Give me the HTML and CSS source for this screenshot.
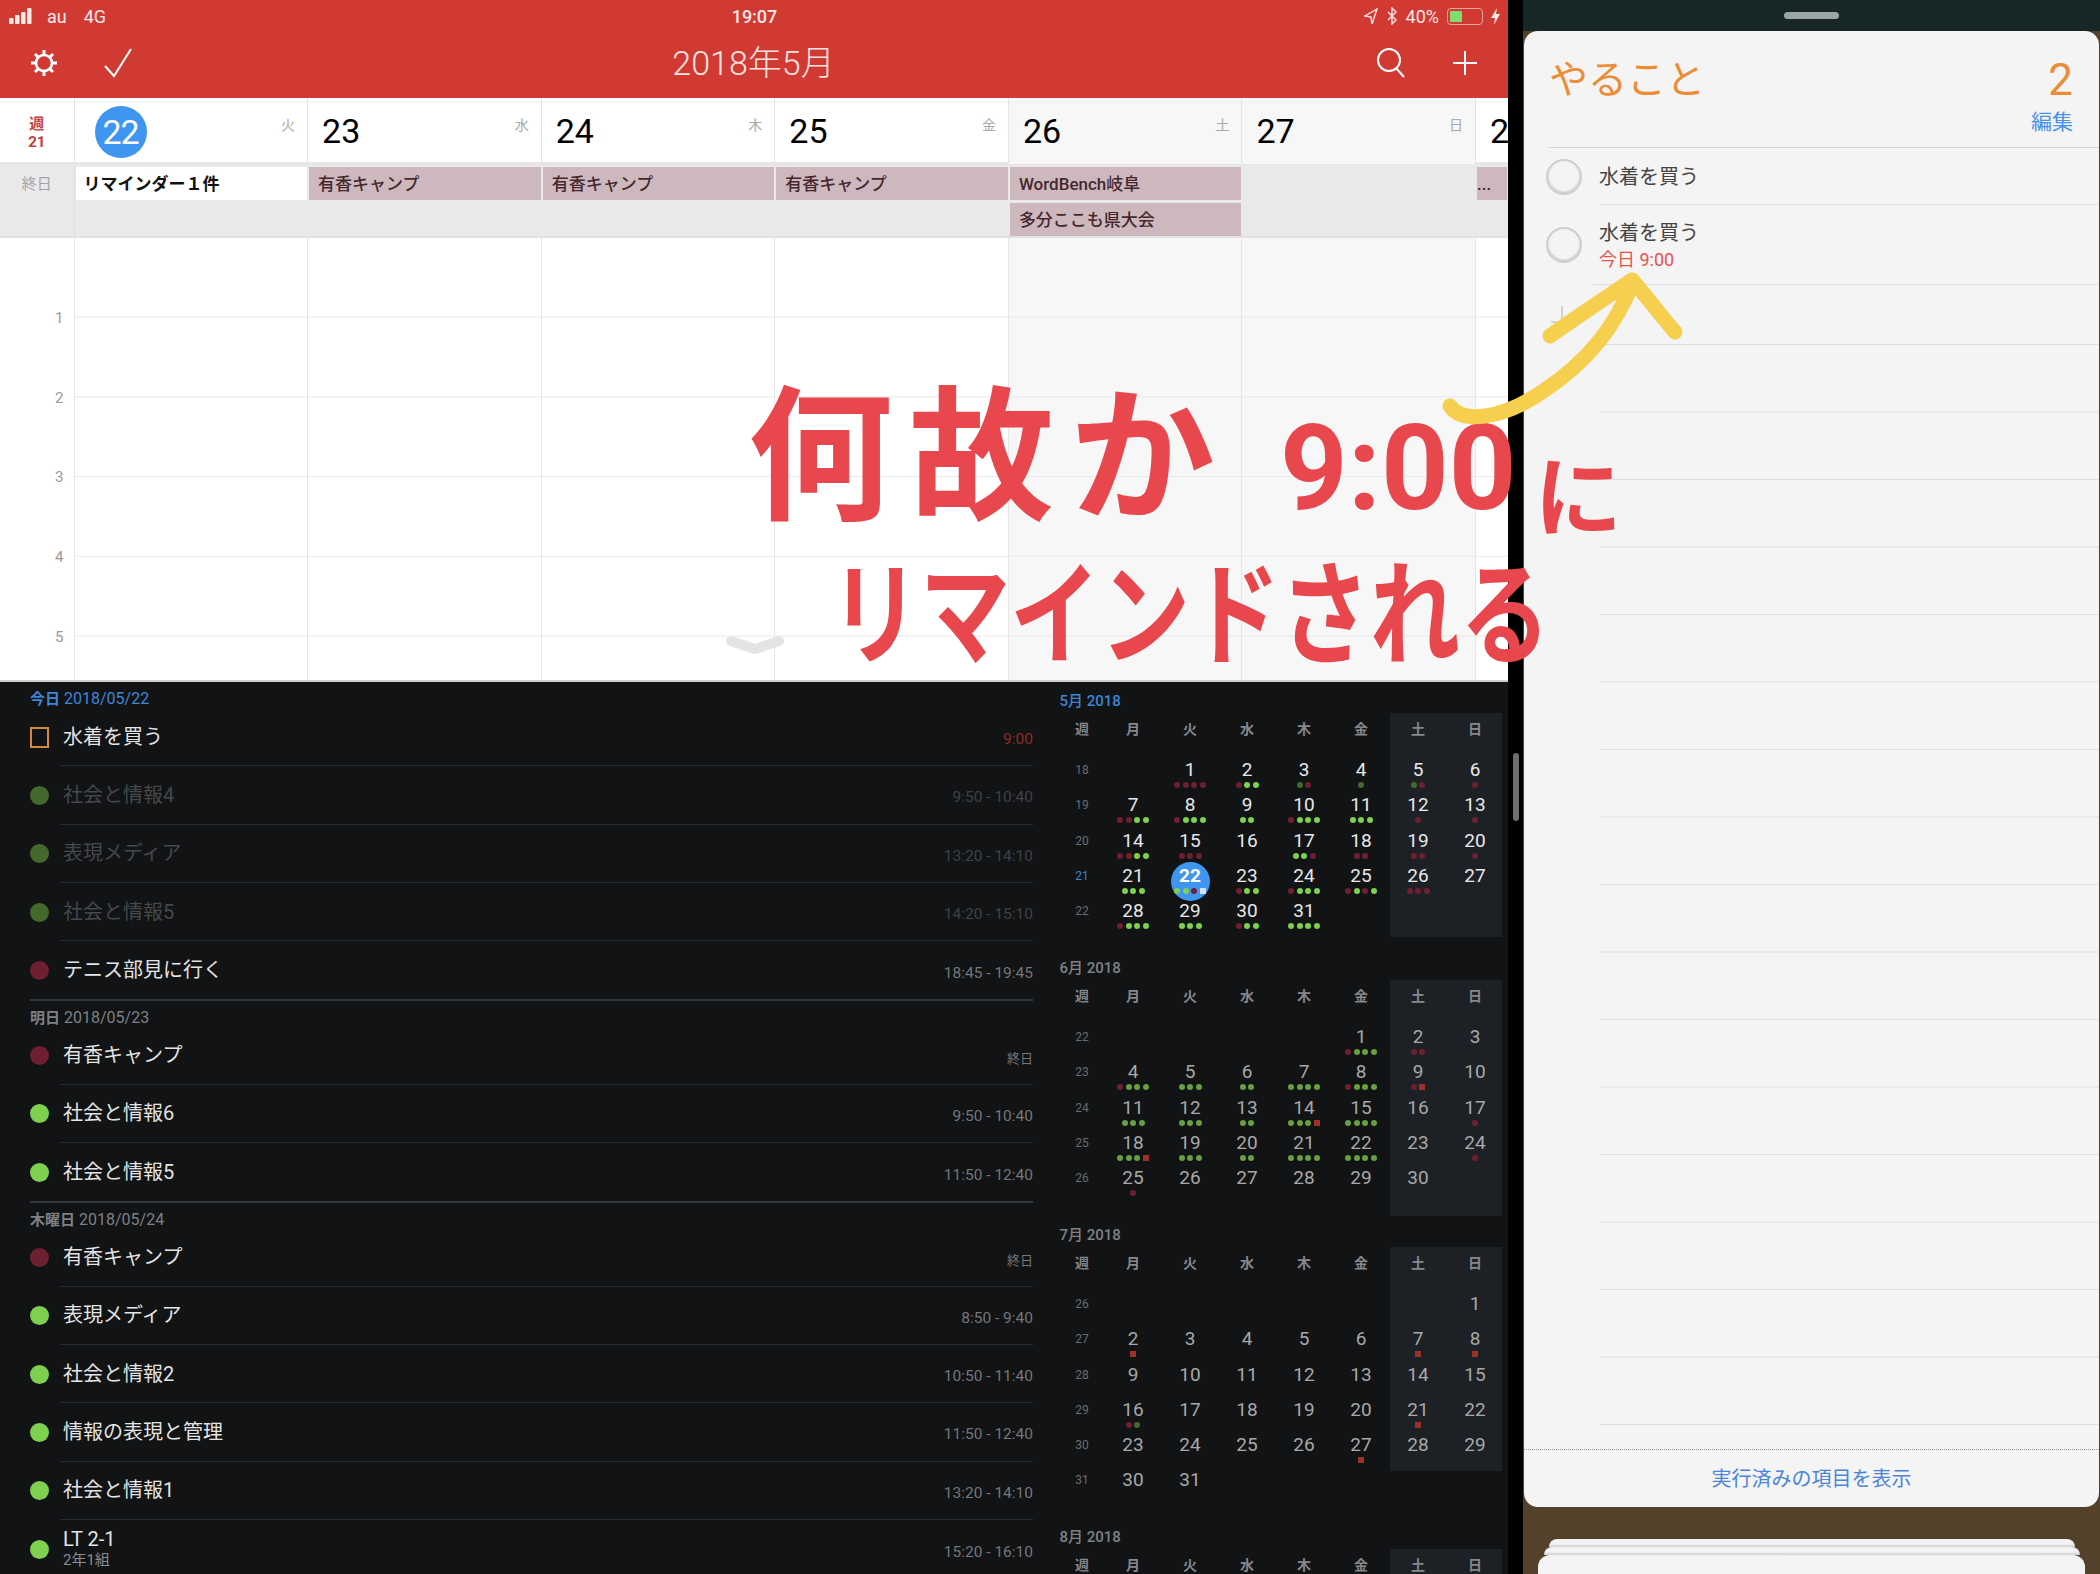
FILE: index.html
```html
<!DOCTYPE html>
<html lang="ja">
<head>
  <meta charset="UTF-8" />
  <title>カレンダーとリマインダー</title>
  <link rel="stylesheet" href="styles.css">
</head>
<body>

<div class="screen">

  <main class="split">
    <header class="topbar">
      <div class="status">
        <div class="status-left">
          <svg class="signal" width="28" height="16" viewBox="0 0 28 16"><rect x="0" y="10" width="4.5" height="6" rx="1"/><rect x="6" y="7" width="4.5" height="9" rx="1"/><rect x="12" y="4" width="4.5" height="12" rx="1"/><rect x="18" y="0" width="4.5" height="16" rx="1"/></svg>
          <span>au</span>
          <span class="carrier">4G</span>
        </div>
        <div class="clock">19:07</div>
        <div class="status-right">
          <svg width="14" height="17" viewBox="0 0 14 17"><path d="M13 1 L1 8 L7 9 L8 16 Z" fill="none" stroke="#fbe9e7" stroke-width="1.4"/></svg>
          <svg width="12" height="18" viewBox="0 0 12 18"><path d="M2 5 L10 13 L6 17 V1 L10 5 L2 13" fill="none" stroke="#fbe9e7" stroke-width="1.4"/></svg>
          <span>40%</span>
          <div class="battery"><div class="battery-fill"></div></div>
          <svg width="9" height="17" viewBox="0 0 9 17"><path d="M6 0 L0 10 H4 L3 17 L9 6 H5 Z" fill="#fbe9e7"/></svg>
        </div>
      </div>
      <div class="toolbar">
        <div class="tool-group">
          <svg width="30" height="30" viewBox="0 0 30 30" fill="none" stroke="#fff" stroke-width="2.6"><circle cx="15" cy="15" r="8"/><path stroke-width="3" d="M15 2v5M15 23v5M2 15h5M23 15h5M6 6l3.4 3.4M20.6 20.6L24 24M24 6l-3.4 3.4M9.4 20.6L6 24"/></svg>
          <svg width="30" height="30" viewBox="0 0 30 30" fill="none" stroke="#fff" stroke-width="2"><path d="M2 18 L11 28 L28 1"/></svg>
        </div>
        <h1 class="month-title">2018年5月</h1>
        <div class="tool-group tool-right">
          <svg width="30" height="30" viewBox="0 0 30 30" fill="none" stroke="#fff" stroke-width="2"><circle cx="13" cy="12" r="11"/><path d="M20 20 L28 29"/></svg>
          <svg width="26" height="26" viewBox="0 0 26 26" fill="none" stroke="#fff" stroke-width="2"><path d="M13 1v24M1 13h24"/></svg>
        </div>
      </div>
    </header>

    <div class="week-head week-cols">
      <div class="week-no">週<br>21</div>
      <div class="day-head"><span class="day-today">22</span><small>火</small></div>
      <div class="day-head"><span>23</span><small>水</small></div>
      <div class="day-head"><span>24</span><small>木</small></div>
      <div class="day-head"><span>25</span><small>金</small></div>
      <div class="day-head weekend"><span>26</span><small>土</small></div>
      <div class="day-head weekend"><span>27</span><small>日</small></div>
      <div class="day-head"><span>28</span></div>
    </div>

    <div class="allday week-cols">
      <div class="allday-label">終日</div>
      <div class="allday-col"><div class="event event-white">リマインダー１件</div></div>
      <div class="allday-col"><div class="event">有香キャンプ</div></div>
      <div class="allday-col"><div class="event">有香キャンプ</div></div>
      <div class="allday-col"><div class="event">有香キャンプ</div></div>
      <div class="allday-col"><div class="event">WordBench岐阜</div><div class="event">多分ここも県大会</div></div>
      <div class="allday-col"></div>
      <div class="allday-col"><div class="event event-clip">...</div></div>
    </div>

    <div class="hours week-cols">
      <div class="hour-labels"><span>1</span><span>2</span><span>3</span><span>4</span><span>5</span></div>
      <div class="hour-col"></div>
      <div class="hour-col"></div>
      <div class="hour-col"></div>
      <div class="hour-col"></div>
      <div class="hour-col weekend"></div>
      <div class="hour-col weekend"></div>
      <div class="hour-col hour-last"></div>
    </div>

    <div class="lower">
      <div class="agenda">
        <section class="agenda-day">
          <h3 class="agenda-date date-today"><b>今日</b> 2018/05/22</h3>
          <div class="row"><i class="box"></i><div class="row-body"><div class="row-title">水着を買う</div><div class="row-time time-red">9:00</div></div></div>
          <div class="row past"><i class="dot green"></i><div class="row-body"><div class="row-title">社会と情報4</div><div class="row-time">9:50 - 10:40</div></div></div>
          <div class="row past"><i class="dot green"></i><div class="row-body"><div class="row-title">表現メディア</div><div class="row-time">13:20 - 14:10</div></div></div>
          <div class="row past"><i class="dot green"></i><div class="row-body"><div class="row-title">社会と情報5</div><div class="row-time">14:20 - 15:10</div></div></div>
          <div class="row"><i class="dot red"></i><div class="row-body"><div class="row-title">テニス部見に行く</div><div class="row-time">18:45 - 19:45</div></div></div>
        </section>
        <section class="agenda-day">
          <h3 class="agenda-date"><b>明日</b> 2018/05/23</h3>
          <div class="row"><i class="dot red"></i><div class="row-body"><div class="row-title">有香キャンプ</div><div class="row-time time-allday">終日</div></div></div>
          <div class="row"><i class="dot green"></i><div class="row-body"><div class="row-title">社会と情報6</div><div class="row-time">9:50 - 10:40</div></div></div>
          <div class="row"><i class="dot green"></i><div class="row-body"><div class="row-title">社会と情報5</div><div class="row-time">11:50 - 12:40</div></div></div>
        </section>
        <section class="agenda-day">
          <h3 class="agenda-date"><b>木曜日</b> 2018/05/24</h3>
          <div class="row"><i class="dot red"></i><div class="row-body"><div class="row-title">有香キャンプ</div><div class="row-time time-allday">終日</div></div></div>
          <div class="row"><i class="dot green"></i><div class="row-body"><div class="row-title">表現メディア</div><div class="row-time">8:50 - 9:40</div></div></div>
          <div class="row"><i class="dot green"></i><div class="row-body"><div class="row-title">社会と情報2</div><div class="row-time">10:50 - 11:40</div></div></div>
          <div class="row"><i class="dot green"></i><div class="row-body"><div class="row-title">情報の表現と管理</div><div class="row-time">11:50 - 12:40</div></div></div>
          <div class="row"><i class="dot green"></i><div class="row-body"><div class="row-title">社会と情報1</div><div class="row-time">13:20 - 14:10</div></div></div>
          <div class="row"><i class="dot green"></i><div class="row-body"><div><div class="row-title title-two">LT 2-1</div><div class="row-sub">2年1組</div></div><div class="row-time">15:20 - 16:10</div></div></div>
        </section>
      </div>
      <div class="months" id="months"></div>
    </div>
  </main>

  <div class="gutter"><div class="scroll-thumb"></div></div>

  <aside class="side">
    <div class="side-top"><div class="handle"></div></div>
    <div class="card">
      <div class="card-head">
        <div class="card-title-row"><h2>やること</h2><span class="count">2</span></div>
        <div class="edit">編集</div>
      </div>
      <div class="task">
        <i class="ring"></i>
        <div class="task-body"><div class="task-name">水着を買う</div></div>
      </div>
      <div class="task task-tall">
        <i class="ring"></i>
        <div class="task-body task-wide">
          <div class="task-name">水着を買う</div>
          <div class="task-when">今日 9:00</div>
        </div>
      </div>
      <div class="task task-add">
        <svg class="add" width="22" height="17" viewBox="0 0 22 17" fill="none" stroke="#c6c6c6" stroke-width="1.5"><path d="M12 0v16M1 16h20"/></svg>
        <div class="task-body"></div>
      </div>
      <div class="rules"></div>
      <div class="card-foot">実行済みの項目を表示</div>
    </div>
    <div class="shelf">
      <div class="sheet sheet-a"></div>
      <div class="sheet sheet-b"></div>
      <div class="sheet sheet-c"></div>
    </div>
  </aside>

  <!-- hand written note drawn over the screenshot -->
  <div class="note">
    <div class="note-line line-one"><span class="big">何故か</span><span class="nine">9:00</span><span class="ni">に</span></div>
    <div class="note-line line-two">リマインドされる</div>
    <svg class="chevron" width="58" height="18" viewBox="0 0 58 18"><path d="M5 5 L29 13 L53 5" fill="none" stroke="#e4e4e4" stroke-width="10" stroke-linecap="round" stroke-linejoin="round"/></svg>
    <svg class="arrow" width="260" height="170" viewBox="0 0 260 170" fill="none" stroke="#f7cf4e" stroke-width="15" stroke-linecap="round" stroke-linejoin="round">
      <path d="M8 134 C20 152 60 147 100 120 C150 87 175 50 191 10"/>
      <path d="M108 64 C135 45 165 25 190 8 C205 25 220 45 233 60"/>
    </svg>
  </div>

</div>

<script src="app.js"></script>
</body>
</html>
```

FILE: styles.css
```css
* { box-sizing: border-box; }
html, body { margin: 0; background: #000; }
body { font-family: Roboto, "Noto Sans CJK JP", sans-serif; }
h1, h2, h3 { margin: 0; font-weight: normal; }
i { display: block; font-style: normal; }

.screen { position: relative; display: flex; width: 2100px; height: 1574px; overflow: hidden; }
.split { width: 1508px; display: flex; flex-direction: column; background: #fff; }
.gutter { width: 15px; background: #000; padding: 753px 0 0 5px; }
.scroll-thumb { width: 6px; height: 68px; border-radius: 3px; background: #6d6f70; }

/* red bar */
.topbar { height: 98px; flex: none; background: #d13a33; color: #fbe9e7; }
.status { display: grid; grid-template-columns: 1fr auto 1fr; height: 32px; align-items: center; font-size: 18px; padding: 0 8px 0 9px; }
.status-left, .status-right { display: flex; align-items: center; gap: 8px; }
.status-right { justify-content: flex-end; }
.signal { fill: #fbe9e7; margin-right: 2px; }
.carrier { margin-left: 9px; }
.clock { font-weight: 500; font-size: 18px; }
.battery { width: 36px; height: 17px; padding: 2px; border: 1px solid #f0a5a0; border-radius: 4px; }
.battery-fill { width: 12px; height: 100%; background: #7fdc6f; border-radius: 1px; }
.toolbar { display: grid; grid-template-columns: 1fr auto 1fr; height: 66px; align-items: center; padding: 0 30px 4px 29px; }
.tool-group { display: flex; align-items: center; gap: 44px; }
.tool-right { justify-content: flex-end; gap: 46px; }
.month-title { font-size: 34px; font-weight: 300; line-height: 44px; color: #f8e4e2; }

/* week columns */
.week-cols { display: grid; grid-template-columns: 74.5px repeat(6, 233.6px) 1fr; flex: none; }
.week-head { height: 67px; border-bottom: 3px solid #e6e6e6; }
.week-no { color: #c6403b; font-size: 15px; font-weight: 700; line-height: 18px; text-align: center; padding-top: 17px; border-right: 1px solid #e4e4e4; }
.day-head { display: flex; justify-content: space-between; padding: 0 12px 0 14px; border-right: 1px solid #e4e4e4; color: #000; font-size: 34px; line-height: 66px; }
.day-head:last-child { border-right: 0; white-space: nowrap; overflow: hidden; }
.day-head small { font-size: 14px; line-height: 54px; color: #a9a9a9; }
.day-today { width: 52px; height: 52px; margin: 8px 0 0 6px; border-radius: 50%; background: #3f96f0; color: #fff; line-height: 52px; text-align: center; letter-spacing: -1px; }
.weekend { background: #f7f7f7; }

.allday { height: 73px; background: #e9e9e9; border-bottom: 2px solid #e2e2e2; }
.allday-label { font-size: 15px; line-height: 38px; color: #a5a5a5; text-align: center; border-right: 1px solid #e0e0e0; }
.allday-col { display: flex; flex-direction: column; gap: 3px; padding: 2px 1px 0; }
.event { height: 33px; padding-left: 9px; background: #ccb8bd; color: #46272e; font-size: 17px; font-weight: 500; line-height: 35px; white-space: nowrap; overflow: hidden; }
.event-white { background: #fff; color: #111; font-weight: 700; padding-left: 8px; }
.event-clip { padding-left: 0; }

.hours { height: 444px; background: #fff; border-bottom: 2px solid #cfcfcf; }
.hour-labels { display: flex; flex-direction: column; align-items: flex-end; gap: 59.7px; padding: 70px 10px 0 0; border-right: 1px solid #e6e6e6; color: #999; font-size: 15px; line-height: 20px; }
.hour-col { border-right: 1px solid #e6e6e6; background-image: linear-gradient(to bottom, transparent 79px, #e9e9e9 79px); background-size: 100% 79.7px; }
.hour-last { border-right: 0; }

/* dark half */
.lower { flex: 1; display: flex; background: #111315; min-height: 0; }
.agenda { width: 1040px; padding: 0 7px 0 30px; color: #e4e4e4; }
.agenda-day { border-bottom: 2px solid #33373c; }
.agenda-day:last-child { border-bottom: 0; }
.agenda-date { height: 25px; padding-top: 7px; font-size: 16px; line-height: 20px; color: #7d8186; }
.agenda-date b { font-size: 15px; }
.date-today { height: 26px; color: #3f86d8; }
.row { display: flex; align-items: center; height: 58.3px; }
.dot { width: 19px; height: 19px; border-radius: 50%; margin-right: 11px; flex: none; }
.dot.green { background: #7ed04f; }
.dot.red { background: #6e1f30; }
.box { width: 19px; height: 21px; margin-right: 11px; border: 2px solid #d58a3b; flex: none; }
.row-body { flex: 1; height: 100%; display: flex; justify-content: space-between; align-items: center; padding-left: 3px; border-bottom: 1px solid #292d32; }
.row:last-child .row-body { border-bottom: 0; }
.row-title { font-size: 20px; line-height: 26px; }
.title-two { line-height: 22px; }
.row-sub { font-size: 15px; line-height: 20px; color: #8a8d91; }
.row-time { font-size: 15.5px; padding-top: 5px; color: #74777b; }
.time-allday { font-size: 13px; }
.time-red { color: #8e2c26; }
.past .dot.green { background: #45692d; }
.past .row-title { color: #45484c; }
.past .row-time { color: #3f4246; }

.months { flex: 1; padding: 8px 0 0 19.5px; }
.month { margin-bottom: 21.5px; }
.month-name { height: 23px; font-size: 15px; font-weight: 500; line-height: 22px; color: #7e8286; }
.month-now .month-name { color: #3d86d6; }
.month-grid { position: relative; isolation: isolate; display: grid; grid-template-columns: 45px repeat(7, 57px); grid-template-rows: 46px; grid-auto-rows: 35.3px; color: #a8a8a8; }
.band { position: absolute; z-index: -1; top: 0; left: 330px; width: 112px; background: #1d2125; }
.month-now .month-grid { color: #e8e8e8; }
.weekdays { grid-column: 1 / -1; display: grid; grid-template-columns: subgrid; color: #85888c; font-size: 14px; font-weight: 700; line-height: 32px; text-align: center; }
.wk { font-size: 12px; line-height: 22px; text-align: center; color: #6a6d70; }
.wk-now { color: #3d86d6; }
.day { position: relative; text-align: center; font-size: 19px; line-height: 22px; }
.day-now { color: #fff; font-weight: 700; }
.day-now::before { content: ""; position: absolute; z-index: -1; top: -3px; left: 9px; width: 39px; height: 39px; border-radius: 50%; background: #3f96f0; }
.dots { display: flex; justify-content: center; gap: 2.5px; height: 8px; align-items: center; }
.dots i { width: 6px; height: 6px; border-radius: 50%; }
.dots .r { background: #6e1f30; }
.dots .g { background: #7ed04f; }
.dots .d { background: #45692d; }
.dots .s { background: #9d3029; border-radius: 0; }
.dots .c { background: #cfe4fb; border-radius: 0; }
.month-later .dots .g { background: #689f40; }

/* reminders */
.side { width: 577px; display: flex; flex-direction: column; background: #53412b; }
.side-top { height: 31px; flex: none; background: #172626; display: flex; justify-content: center; padding-top: 12px; }
.handle { width: 55px; height: 7px; border-radius: 4px; background: #9aa6a5; }
.card { height: 1476px; flex: none; margin: 0 1px; display: flex; flex-direction: column; background: #f4f4f4; border-radius: 14px; }
.card-head { height: 117px; flex: none; margin-left: 24px; padding: 22px 26px 0 1px; border-bottom: 1px solid #d8d8d8; }
.card-title-row { display: flex; justify-content: space-between; }
.card-head h2 { font-size: 39px; line-height: 54px; color: #ec8c37; }
.count { font-size: 44px; line-height: 54px; color: #ec8c37; }
.edit { text-align: right; font-size: 21px; line-height: 30px; color: #4a8fe8; }
.task { display: flex; align-items: center; height: 57px; flex: none; padding-left: 22px; }
.ring { width: 36px; height: 36px; flex: none; border-radius: 50%; border: 2px solid #cfcfcf; box-shadow: inset 0 -1px 2px #bbb; }
.task-body { flex: 1; height: 100%; margin-left: 17px; border-bottom: 1px solid #dedede; display: flex; flex-direction: column; justify-content: center; padding-top: 2px; }
.task-name { font-size: 20px; line-height: 28px; color: #444; }
.task-when { font-size: 18px; line-height: 26px; color: #e5534b; }
.task-tall { height: 80px; }
.task-wide { margin-left: 9px; padding-left: 8px; padding-top: 3px; }
.task-add { height: 60px; padding-left: 26px; }
.add { flex: none; margin-top: -2px; }
.task-add .task-body { margin-left: 27px; }
.rules { flex: 1; margin: 0 0 23px 75px; background-image: linear-gradient(to bottom, transparent 66.5px, #dedede 66.5px); background-size: 100% 67.5px; }
.card-foot { height: 58px; flex: none; border-top: 1px dotted #999; text-align: center; font-size: 20px; line-height: 58px; color: #4a85d8; }
.shelf { flex: 1; display: flex; flex-direction: column; align-items: center; padding-top: 32px; }
.sheet { height: 8px; border-radius: 12px 12px 0 0; background: linear-gradient(to bottom, #f2f2f2 60%, #cfcfcf); flex: none; }
.sheet-a { width: 526px; }
.sheet-b { width: 536px; }
.sheet-c { width: 547px; height: 30px; background: #f3f3f3; }

/* hand written note: free canvas over everything */
.note { position: absolute; inset: 0; pointer-events: none; color: #e8484d; font-family: "Noto Sans CJK JP", sans-serif; font-weight: 700; }
.note-line { position: absolute; display: flex; align-items: baseline; white-space: nowrap; line-height: 1; }
.line-one { left: 748px; top: 374px; }
.big { font-size: 145px; letter-spacing: 16px; }
.nine { font-family: Roboto, sans-serif; font-size: 118px; margin-left: 49px; }
.ni { font-size: 88px; margin-left: 18px; transform: translateY(20px); }
.line-two { left: 830px; top: 550px; font-size: 90px; transform: scaleY(1.25); transform-origin: top; }
.chevron { position: absolute; left: 726px; top: 636px; }
.arrow { position: absolute; left: 1442px; top: 272px; }
```

FILE: app.js
```js
// r red, g green, d dim green, s small red square, c checked reminder
const months = [
  {
    name: "5月 2018", first: 1, days: 31, week: 18, band: 224, cls: "month-now",
    dots: {
      1: "rrrr", 2: "rgg", 3: "dr", 4: "d", 5: "dr", 6: "r", 7: "rrgg", 8: "rggg", 9: "gg", 10: "rggg",
      11: "ggg", 12: "r", 13: "r", 14: "rrgg", 15: "rrr", 17: "ggr", 18: "rr", 19: "rr", 20: "r",
      21: "ggg", 22: "ggrc", 23: "rgg", 24: "rggg", 25: "rgrg", 26: "rrr", 28: "rggg", 29: "ggg", 30: "rgg", 31: "gggg"
    }
  },
  {
    name: "6月 2018", first: 4, days: 30, week: 22, band: 236, cls: "month-later",
    dots: {
      1: "rggg", 2: "rr", 4: "rggg", 5: "ggg", 6: "gg", 7: "gggg", 8: "rggg", 9: "rs", 11: "ggg", 12: "ggg", 13: "gg",
      14: "gggs", 15: "gggg", 17: "r", 18: "gggs", 19: "ggg", 20: "gg", 21: "gggg", 22: "gggg", 24: "r", 25: "r"
    }
  },
  {
    name: "7月 2018", first: 6, days: 31, week: 26, band: 224, cls: "month-later",
    dots: { 2: "s", 7: "s", 8: "s", 16: "rd", 21: "s", 27: "s" }
  },
  { name: "8月 2018", first: 2, days: 0, week: 31, band: 224, cls: "month-later", dots: {} }
];

const weekdays = ["週", "月", "火", "水", "木", "金", "土", "日"];

function renderDay(month, d) {
  const isToday = month.cls === "month-now" && d === 22;
  const dots = (month.dots[d] || "").split("").map(t => `<i class="${t}"></i>`).join("");
  return `<div class="day${isToday ? " day-now" : ""}">${d}<div class="dots">${dots}</div></div>`;
}

function renderMonth(month) {
  let cells = weekdays.map(w => `<div>${w}</div>`).join("");
  cells = `<div class="weekdays">${cells}</div>`;
  let week = month.week;
  let col = month.first;
  if (month.days > 0) {
    cells += `<div class="wk">${week}</div>` + "<div></div>".repeat(col);
  }
  for (let d = 1; d <= month.days; d++) {
    if (col === 7) {
      week++;
      col = 0;
      cells += `<div class="wk${month.cls === "month-now" && week === 21 ? " wk-now" : ""}">${week}</div>`;
    }
    cells += renderDay(month, d);
    col++;
  }
  return `<div class="month ${month.cls}">
    <div class="month-name">${month.name}</div>
    <div class="month-grid"><div class="band" style="height:${month.band}px"></div>${cells}</div>
  </div>`;
}

document.getElementById("months").innerHTML = months.map(renderMonth).join("");
```
